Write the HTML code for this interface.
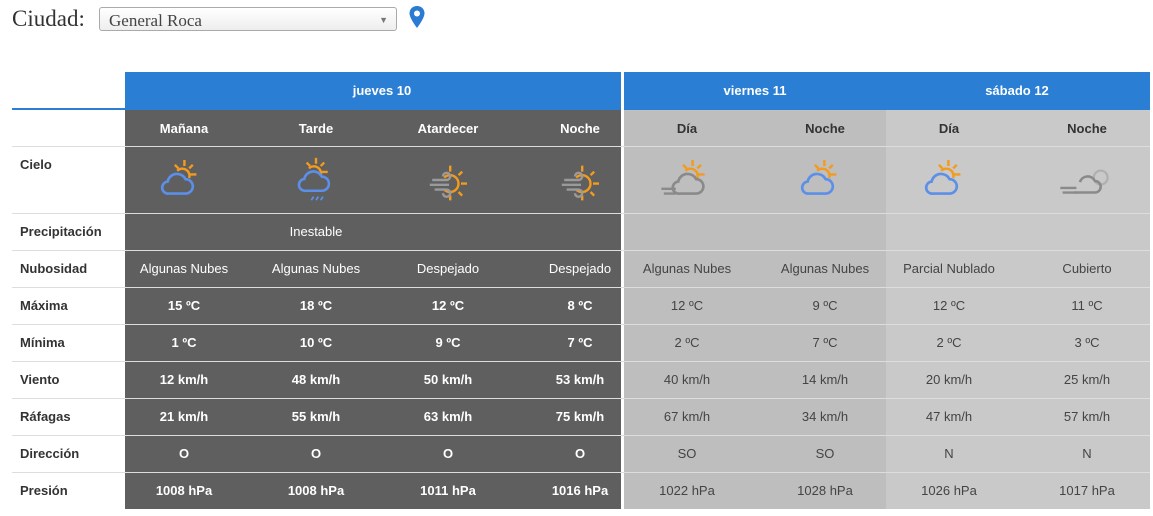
<!DOCTYPE html><html><head><meta charset="utf-8"><style>
body{margin:0;width:1153px;height:516px;background:#fff;position:relative;overflow:hidden;font-family:"Liberation Sans",sans-serif;}
.a{position:absolute}
.t{position:absolute;transform:translateX(-50%);white-space:nowrap;font-size:13px;line-height:37px}
.d{color:#fff;font-weight:bold}
.l{color:#444}
.lab{position:absolute;left:20px;font-size:13px;font-weight:bold;color:#333;line-height:37px}
.hl{position:absolute;height:1px;background:#ddd}
.ic{position:absolute;overflow:visible}
</style></head><body>
<div class="a" style="left:12px;top:6px;font-family:'Liberation Serif',serif;font-size:23px;color:#333">Ciudad:</div>
<div class="a" style="left:99px;top:7px;width:298px;height:24px;border:1px solid #aaa;border-radius:3px;background:linear-gradient(#fff,#eee);font-family:'Liberation Serif',serif;font-size:17px;color:#444;line-height:25px;box-sizing:border-box;padding-left:9px">General Roca<span style="position:absolute;right:8px;top:0;font-size:9px;color:#777">▼</span></div>
<svg class="a" style="left:408px;top:5px" width="18" height="24" viewBox="0 0 18 24"><path d="M9 1C4.5 1 1.5 4.3 1.5 8.3 1.5 13.5 9 23 9 23S16.5 13.5 16.5 8.3C16.5 4.3 13.5 1 9 1Z" fill="#2a7bd3"/><circle cx="9" cy="8.5" r="3" fill="#fff"/></svg>
<div class="a" style="left:125px;top:72px;width:496px;height:38px;background:#2a7fd4"></div>
<div class="a" style="left:624px;top:72px;width:526px;height:38px;background:#2a7fd4"></div>
<div class="a" style="left:12px;top:108px;width:113px;height:2px;background:#2a7fd4"></div>
<div class="a" style="left:125px;top:110px;width:496px;height:399px;background:#5f5f5f"></div>
<div class="a" style="left:624px;top:110px;width:262px;height:399px;background:#bebebe"></div>
<div class="a" style="left:886px;top:110px;width:264px;height:399px;background:#c9c9c9"></div>
<div class="hl" style="left:12px;top:146px;width:1138px"></div>
<div class="hl" style="left:12px;top:213px;width:1138px"></div>
<div class="hl" style="left:12px;top:250px;width:1138px"></div>
<div class="hl" style="left:12px;top:287px;width:1138px"></div>
<div class="hl" style="left:12px;top:324px;width:1138px"></div>
<div class="hl" style="left:12px;top:361px;width:1138px"></div>
<div class="hl" style="left:12px;top:398px;width:1138px"></div>
<div class="hl" style="left:12px;top:435px;width:1138px"></div>
<div class="hl" style="left:12px;top:472px;width:1138px"></div>
<div class="t d" style="left:382px;top:72px">jueves 10</div>
<div class="t d" style="left:755px;top:72px">viernes 11</div>
<div class="t d" style="left:1017px;top:72px">sábado 12</div>
<div class="t d" style="left:184px;top:110px">Mañana</div>
<div class="t d" style="left:316px;top:110px">Tarde</div>
<div class="t d" style="left:448px;top:110px">Atardecer</div>
<div class="t d" style="left:580px;top:110px">Noche</div>
<div class="t" style="left:687px;top:110px;font-weight:bold;color:#333">Día</div>
<div class="t" style="left:825px;top:110px;font-weight:bold;color:#333">Noche</div>
<div class="t" style="left:949px;top:110px;font-weight:bold;color:#333">Día</div>
<div class="t" style="left:1087px;top:110px;font-weight:bold;color:#333">Noche</div>
<div class="lab" style="top:146px">Cielo</div>
<div class="lab" style="top:213px">Precipitación</div>
<div class="lab" style="top:250px">Nubosidad</div>
<div class="lab" style="top:287px">Máxima</div>
<div class="lab" style="top:324px">Mínima</div>
<div class="lab" style="top:361px">Viento</div>
<div class="lab" style="top:398px">Ráfagas</div>
<div class="lab" style="top:435px">Dirección</div>
<div class="lab" style="top:472px">Presión</div>
<svg width="0" height="0" style="position:absolute"><defs>
<g id="sun" stroke="#f29b1d" stroke-width="2" fill="none"><path d="M16 14a6 6 0 0 1 10 6"/><path d="M22 5v5M29 9l-3 3M32 17h-5M14 9l3 3"/></g>
<path id="cl" d="M9 33h14a6 6 0 0 0 0-12 8 8 0 0 0-15 2 5 5 0 0 0 1 10z" fill="none" stroke-width="2.2"/>
<g id="wind" stroke="#9a9a9a" stroke-width="2" fill="none"><path d="M6 20h12a3 3 0 1 0-3-3M4 24h16M8 28h10a3 3 0 1 1-3 3"/></g>
<g id="wsun"><path d="M16 18a7 7 0 1 1 0 10" stroke="#f29b1d" stroke-width="2" fill="none"/><path d="M21 13v-5M28 16l3-3M30 23h5M28 30l3 3M21 33v4" stroke="#f29b1d" stroke-width="2"/><use href="#wind"/></g>
</defs></svg>
<svg class="a" style="left:158px;top:154px" width="48" height="48" viewBox="0 0 40 40"><use href="#sun"/><use href="#cl" stroke="#5b8fe8"/></svg>
<svg class="a" style="left:290px;top:152px" width="52" height="54" viewBox="0 0 44 46"><use href="#sun"/><use href="#cl" stroke="#5b8fe8" transform="translate(4,0)"/><path d="M20 38l-2 3M24 38l-2 3M28 38l-2 3" stroke="#5b8fe8" stroke-width="1.5"/></svg>
<svg class="a" style="left:425px;top:156px" width="48" height="48" viewBox="0 0 40 40"><use href="#wsun"/></svg>
<svg class="a" style="left:557px;top:156px" width="48" height="48" viewBox="0 0 40 40"><use href="#wsun"/></svg>
<svg class="a" style="left:659px;top:154px" width="60" height="48" viewBox="0 0 50 40"><use href="#sun" transform="translate(6,0)"/><use href="#cl" stroke="#8a8a8a" transform="translate(8,0)"/><path d="M2 29h12M4 33h10" stroke="#8a8a8a" stroke-width="2"/></svg>
<svg class="a" style="left:798px;top:154px" width="48" height="48" viewBox="0 0 40 40"><use href="#sun"/><use href="#cl" stroke="#5b8fe8"/></svg>
<svg class="a" style="left:922px;top:154px" width="48" height="48" viewBox="0 0 40 40"><use href="#sun"/><use href="#cl" stroke="#5b8fe8"/></svg>
<svg class="a" style="left:1058px;top:160px" width="60" height="42" viewBox="0 0 52 36"><circle cx="37" cy="15" r="6" fill="none" stroke="#b0b0b0" stroke-width="2"/><path d="M14 28h18a5 5 0 0 0 0-10 7 7 0 0 0-13 1" fill="none" stroke="#8a8a8a" stroke-width="2.2"/><path d="M2 24h14M4 28h12" stroke="#8a8a8a" stroke-width="2"/></svg>
<div class="t d" style="left:316px;top:213px;font-weight:normal">Inestable</div>
<div id="rows"></div>
<script>
var rows=[
["Algunas Nubes","Algunas Nubes","Despejado","Despejado","Algunas Nubes","Algunas Nubes","Parcial Nublado","Cubierto"],
["15 ºC","18 ºC","12 ºC","8 ºC","12 ºC","9 ºC","12 ºC","11 ºC"],
["1 ºC","10 ºC","9 ºC","7 ºC","2 ºC","7 ºC","2 ºC","3 ºC"],
["12 km/h","48 km/h","50 km/h","53 km/h","40 km/h","14 km/h","20 km/h","25 km/h"],
["21 km/h","55 km/h","63 km/h","75 km/h","67 km/h","34 km/h","47 km/h","57 km/h"],
["O","O","O","O","SO","SO","N","N"],
["1008 hPa","1008 hPa","1011 hPa","1016 hPa","1022 hPa","1028 hPa","1026 hPa","1017 hPa"]];
var cx=[184,316,448,580,687,825,949,1087],h="";
rows.forEach(function(r,i){r.forEach(function(v,j){
h+='<div class="t '+(j<4?'d':'l')+'" style="left:'+cx[j]+'px;top:'+(250+37*i)+'px;'+(j<4?'font-weight:'+(i>0?'bold':'normal')+';':'')+'">'+v+'</div>';});});
document.getElementById("rows").outerHTML=h;
</script>
</body></html>
